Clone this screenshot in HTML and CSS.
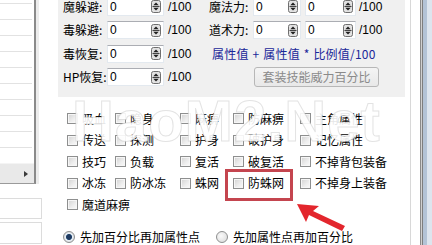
FILE: index.html
```html
<!DOCTYPE html>
<html lang="zh-CN">
<head>
<meta charset="utf-8">
<title>套装属性</title>
<link rel="stylesheet" href="styles.css">
</head>
<body>
<div class="win">
  <aside class="side">
    <div class="list">
      <div class="list-rows">
        <div class="lr"></div><div class="lr"></div><div class="lr"></div><div class="lr"></div><div class="lr"></div>
        <div class="lr"></div><div class="lr"></div><div class="lr"></div><div class="lr"></div><div class="lr"></div>
      </div>
      <div class="hscroll"><span class="harrow"></span></div>
    </div>
    <div class="field f1"></div>
    <div class="field f2"></div>
  </aside>

  <main class="main">
    <section class="panel">
      <div class="prow">
        <span class="lbl">魔躲避:</span>
        <span class="spin s1"><span class="val">0</span><svg class="sp" viewBox="0 0 10 13" width="10" height="13"><rect x="0.5" y="0.5" width="9" height="12" rx="2" fill="#e2e2e2" stroke="#6f6f6f"/><path d="M2.3 5.2L5 2.4L7.7 5.2Z" fill="#1e1e1e"/><path d="M2.3 7.8L5 10.6L7.7 7.8Z" fill="#1e1e1e"/><line x1="1.5" y1="6.5" x2="8.5" y2="6.5" stroke="#444"/></svg></span>
        <span class="unit">/100</span>
        <span class="lbl">魔法力:</span>
        <span class="spin s2"><span class="val">0</span><svg class="sp" viewBox="0 0 10 13" width="10" height="13"><rect x="0.5" y="0.5" width="9" height="12" rx="2" fill="#e2e2e2" stroke="#6f6f6f"/><path d="M2.3 5.2L5 2.4L7.7 5.2Z" fill="#1e1e1e"/><path d="M2.3 7.8L5 10.6L7.7 7.8Z" fill="#1e1e1e"/><line x1="1.5" y1="6.5" x2="8.5" y2="6.5" stroke="#444"/></svg></span>
        <span class="spin s3"><span class="val">0</span><svg class="sp" viewBox="0 0 10 13" width="10" height="13"><rect x="0.5" y="0.5" width="9" height="12" rx="2" fill="#e2e2e2" stroke="#6f6f6f"/><path d="M2.3 5.2L5 2.4L7.7 5.2Z" fill="#1e1e1e"/><path d="M2.3 7.8L5 10.6L7.7 7.8Z" fill="#1e1e1e"/><line x1="1.5" y1="6.5" x2="8.5" y2="6.5" stroke="#444"/></svg></span>
        <span class="unit2">/100</span>
      </div>
      <div class="prow">
        <span class="lbl">毒躲避:</span>
        <span class="spin s1"><span class="val">0</span><svg class="sp" viewBox="0 0 10 13" width="10" height="13"><rect x="0.5" y="0.5" width="9" height="12" rx="2" fill="#e2e2e2" stroke="#6f6f6f"/><path d="M2.3 5.2L5 2.4L7.7 5.2Z" fill="#1e1e1e"/><path d="M2.3 7.8L5 10.6L7.7 7.8Z" fill="#1e1e1e"/><line x1="1.5" y1="6.5" x2="8.5" y2="6.5" stroke="#444"/></svg></span>
        <span class="unit">/100</span>
        <span class="lbl">道术力:</span>
        <span class="spin s2"><span class="val">0</span><svg class="sp" viewBox="0 0 10 13" width="10" height="13"><rect x="0.5" y="0.5" width="9" height="12" rx="2" fill="#e2e2e2" stroke="#6f6f6f"/><path d="M2.3 5.2L5 2.4L7.7 5.2Z" fill="#1e1e1e"/><path d="M2.3 7.8L5 10.6L7.7 7.8Z" fill="#1e1e1e"/><line x1="1.5" y1="6.5" x2="8.5" y2="6.5" stroke="#444"/></svg></span>
        <span class="spin s3"><span class="val">0</span><svg class="sp" viewBox="0 0 10 13" width="10" height="13"><rect x="0.5" y="0.5" width="9" height="12" rx="2" fill="#e2e2e2" stroke="#6f6f6f"/><path d="M2.3 5.2L5 2.4L7.7 5.2Z" fill="#1e1e1e"/><path d="M2.3 7.8L5 10.6L7.7 7.8Z" fill="#1e1e1e"/><line x1="1.5" y1="6.5" x2="8.5" y2="6.5" stroke="#444"/></svg></span>
        <span class="unit2">/100</span>
      </div>
      <div class="prow">
        <span class="lbl">毒恢复:</span>
        <span class="spin s1"><span class="val">0</span><svg class="sp" viewBox="0 0 10 13" width="10" height="13"><rect x="0.5" y="0.5" width="9" height="12" rx="2" fill="#e2e2e2" stroke="#6f6f6f"/><path d="M2.3 5.2L5 2.4L7.7 5.2Z" fill="#1e1e1e"/><path d="M2.3 7.8L5 10.6L7.7 7.8Z" fill="#1e1e1e"/><line x1="1.5" y1="6.5" x2="8.5" y2="6.5" stroke="#444"/></svg></span>
        <span class="unit">/100</span>
        <span class="formula">属性值 + 属性值 * 比例值/100</span>
      </div>
      <div class="prow">
        <span class="lbl">HP恢复:</span>
        <span class="spin s1"><span class="val">0</span><svg class="sp" viewBox="0 0 10 13" width="10" height="13"><rect x="0.5" y="0.5" width="9" height="12" rx="2" fill="#e2e2e2" stroke="#6f6f6f"/><path d="M2.3 5.2L5 2.4L7.7 5.2Z" fill="#1e1e1e"/><path d="M2.3 7.8L5 10.6L7.7 7.8Z" fill="#1e1e1e"/><line x1="1.5" y1="6.5" x2="8.5" y2="6.5" stroke="#444"/></svg></span>
        <span class="unit">/100</span>
        <button class="btn" disabled>套装技能威力百分比</button>
      </div>
    </section>

    <section class="checks">
      <label class="ck"><i class="box"></i>吸血</label>
      <label class="ck"><i class="box"></i>隐身</label>
      <label class="ck"><i class="box"></i>麻痹</label>
      <label class="ck"><i class="box"></i>防麻痹</label>
      <label class="ck"><i class="box"></i>主角属性</label>

      <label class="ck"><i class="box"></i>传送</label>
      <label class="ck"><i class="box"></i>探测</label>
      <label class="ck"><i class="box"></i>护身</label>
      <label class="ck"><i class="box"></i>破护身</label>
      <label class="ck"><i class="box"></i>记忆属性</label>

      <label class="ck"><i class="box"></i>技巧</label>
      <label class="ck"><i class="box"></i>负载</label>
      <label class="ck"><i class="box"></i>复活</label>
      <label class="ck"><i class="box"></i>破复活</label>
      <label class="ck"><i class="box"></i>不掉背包装备</label>

      <label class="ck"><i class="box"></i>冰冻</label>
      <label class="ck"><i class="box"></i>防冰冻</label>
      <label class="ck"><i class="box"></i>蛛网</label>
      <label class="ck"><i class="box"></i>防蛛网</label>
      <label class="ck"><i class="box"></i>不掉身上装备</label>

      <label class="ck"><i class="box"></i>魔道麻痹</label>
    </section>

    <div class="radios">
      <label class="rd first"><i class="dot on"></i>先加百分比再加属性点</label>
      <label class="rd"><i class="dot"></i>先加属性点再加百分比</label>
    </div>
  </main>

  <div class="frame"></div>

  <div class="watermark">HaoM2.Net</div>
  <div class="redbox"></div>
  <svg class="arrow" viewBox="0 0 60 36" width="60" height="36"><polygon points="7,6 29,8 23,13 55,28 52,33 19,17 16,24" fill="#e3262d"/></svg>
</div>
</body>
</html>
```

FILE: styles.css
```css
* { box-sizing: border-box; }
html, body { margin: 0; padding: 0; }
body {
  width: 432px;
  height: 245px;
  overflow: hidden;
  background: #fff;
  font-family: "Noto Sans CJK SC", "Liberation Sans", sans-serif;
  font-size: 12px;
  color: #000;
}
.win {
  position: relative;
  display: flex;
  width: 432px;
  height: 245px;
  overflow: hidden;
}

/* left column */
.side {
  width: 58px;
  flex: none;
  display: flex;
  flex-direction: column;
}
.list {
  width: 36px;
  height: 184px;
  border-right: 2px solid #8a8a8a;
  border-bottom: 1px solid #9a9a9a;
  display: flex;
  flex-direction: column;
  box-shadow: 3px 0 0 #ececec;
}
.list-rows {
  flex: 1;
  padding-top: 3px;
  padding-right: 2px;
  overflow: hidden;
}
.lr {
  height: 16px;
  border-top: 1px solid #e2e2e2;
}
.hscroll {
  height: 20px;
  background: #e9e9e9;
  border-top: 1px solid #f4f4f4;
  display: flex;
  align-items: center;
  padding-left: 24px;
}
.harrow {
  width: 0;
  height: 0;
  border-top: 3px solid transparent;
  border-bottom: 3px solid transparent;
  border-left: 4px solid #3a3a3a;
}
.field {
  width: 42px;
  border: 1px solid #dcdcdc;
  border-left: none;
  background: #fff;
}
.f1 { height: 21px; margin-top: 14px; }
.f2 { height: 22px; margin-top: 3px; }

/* main */
.main {
  width: 352px;
  flex: none;
  display: flex;
  flex-direction: column;
}
.panel {
  width: 347px;
  height: 102px;
  margin-top: -5px;
  background: #f0f0f0;
  padding-left: 5px;
  flex: none;
}
.prow {
  height: 23.5px;
  display: flex;
  align-items: center;
  white-space: nowrap;
  line-height: 12px;
}
.lbl {
  width: 44px;
  flex: none;
  font-size: 12px;
  line-height: 12px;
}
.spin {
  flex: none;
  height: 18px;
  display: flex;
  align-items: center;
  background: #fff;
  border: 1px solid #e3e9ef;
  border-top-color: #abadb3;
  padding-left: 2px;
  padding-right: 2px;
}
.s1 { width: 57px; }
.s2 { width: 48px; }
.s3 { width: 51px; margin-left: 4px; }
.val {
  flex: 1;
  font-family: "Liberation Sans", sans-serif;
  font-size: 12px;
  line-height: 12px;
}
.sp { flex: none; display: block; }
.unit {
  width: 41px;
  flex: none;
  margin-left: 4px;
  font-family: "Liberation Sans", sans-serif;
  font-size: 12px;
  line-height: 12px;
}
.unit2 {
  margin-left: 3px;
  font-family: "Liberation Sans", sans-serif;
  font-size: 12px;
  line-height: 12px;
}
.formula {
  margin-left: 3px;
  color: #1a2799;
  font-size: 12px;
  line-height: 12px;
  word-spacing: 1px;
  letter-spacing: 0.2px;
}
.btn {
  margin-left: 45px;
  width: 125px;
  height: 20px;
  padding: 0;
  border: 1px solid #b7b7b7;
  border-radius: 3px;
  background: linear-gradient(#f4f4f4, #e8e8e8);
  color: #8a8a8a;
  font-family: "Noto Sans CJK SC", sans-serif;
  font-size: 12px;
  line-height: 18px;
}

/* checkboxes */
.checks {
  display: grid;
  grid-template-columns: 48px 65px 53px 67px auto;
  grid-auto-rows: 21.5px;
  padding-top: 11px;
  padding-left: 9px;
}
.ck {
  display: flex;
  align-items: center;
  gap: 4px;
  white-space: nowrap;
  line-height: 14px;
}
.box {
  width: 11px;
  height: 11px;
  flex: none;
  border: 1px solid #8e8f8f;
  background: linear-gradient(135deg, #d2d2d2 0%, #eeeeee 60%, #fafafa 100%);
  box-shadow: inset 0 0 0 1px #f6f6f6;
}

/* radios */
.radios {
  display: flex;
  align-items: center;
  height: 20px;
  margin-top: 14px;
  padding-left: 5px;
}
.rd {
  display: flex;
  align-items: center;
  gap: 5px;
  white-space: nowrap;
  line-height: 14px;
}
.rd.first { width: 153px; }
.dot {
  width: 12px;
  height: 12px;
  flex: none;
  border-radius: 50%;
  border: 1px solid #8e8f8f;
  background: radial-gradient(circle at 40% 40%, #fafafa, #d8d8d8);
}
.dot.on {
  background: radial-gradient(circle, #1f3a60 0 2.5px, #6a8fb0 3px, #e8eef4 3.5px, #d0d0d0 100%);
}

/* window frame */
.frame {
  width: 22px;
  flex: none;
  background: linear-gradient(to right,
    #d8d8d8 0 1px,
    #ffffff 1px 10px,
    #8a8a8a 10px 11px,
    #d0d0d0 11px 12px,
    #7e7e7e 12px 13px,
    #b3c3d6 13px 17px,
    #dde5ee 17px 22px);
}

/* overlays */
.watermark {
  position: absolute;
  left: 72px;
  top: 86px;
  font-family: "Liberation Sans", sans-serif;
  font-weight: bold;
  font-size: 58px;
  line-height: 70px;
  letter-spacing: 1px;
  color: rgba(255, 255, 255, 0.9);
  -webkit-text-stroke: 1px rgba(185, 185, 185, 0.4);
  pointer-events: none;
  white-space: nowrap;
}
.redbox {
  position: absolute;
  left: 225px;
  top: 169px;
  width: 68px;
  height: 32px;
  border: 3px solid #c4454f;
}
.arrow {
  position: absolute;
  left: 290px;
  top: 198px;
}
```
